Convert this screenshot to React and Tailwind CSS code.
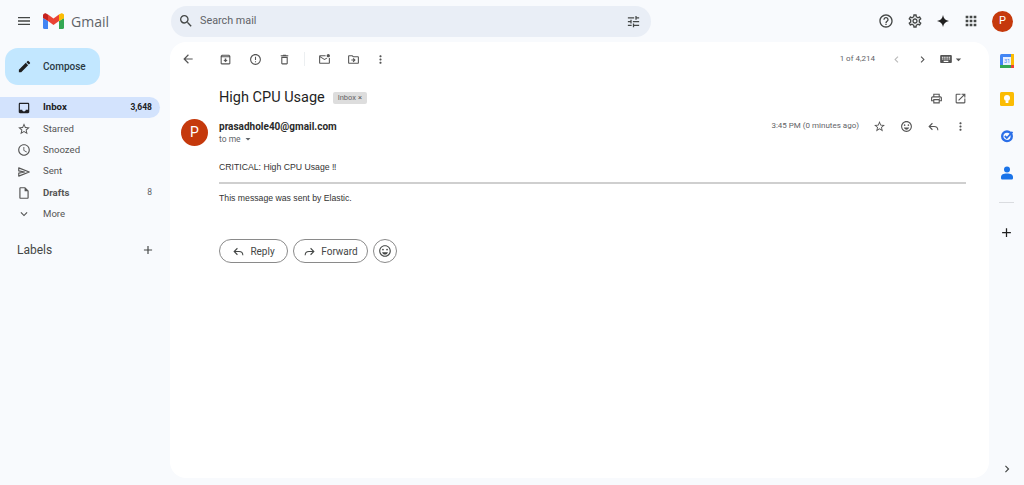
import {
  MdMenu, MdSearch, MdTune, MdHelpOutline, MdOutlineSettings, MdApps, MdArrowBack, MdOutlineArchive,
  MdErrorOutline, MdOutlineDelete, MdOutlineMarkEmailUnread, MdOutlineDriveFileMove, MdMoreVert,
  MdChevronLeft, MdChevronRight, MdKeyboard, MdArrowDropDown, MdOutlinePrint, MdOpenInNew, MdStarBorder,
  MdOutlineEmojiEmotions, MdInbox, MdOutlineAccessTime, MdOutlineInsertDriveFile,
  MdExpandMore, MdAdd, MdEdit,
} from 'react-icons/md'

function SentIcon({ size = 14 }) {
  return (
    <svg width={size} height={size} viewBox="0 0 24 24" fill="none" stroke="currentColor" strokeWidth="2" strokeLinejoin="round">
      <path d="M3 5 21 12 3 19V14L13 12 3 10z" />
    </svg>
  )
}

function ReplyIcon({ size = 13, className = '' }) {
  return (
    <svg className={className} width={size} height={size} viewBox="0 0 24 24" fill="none" stroke="currentColor" strokeWidth="2">
      <path d="M10 6 4 12l6 6M4 12h9c4 0 7 3 7 7" />
    </svg>
  )
}

const NAV = [
  { label: 'Inbox', icon: MdInbox, count: '3,648', active: true },
  { label: 'Starred', icon: MdStarBorder },
  { label: 'Snoozed', icon: MdOutlineAccessTime },
  { label: 'Sent', icon: SentIcon },
  { label: 'Drafts', icon: MdOutlineInsertDriveFile, count: '8', bold: true },
  { label: 'More', icon: MdExpandMore },
]

function GmailLogo() {
  return (
    <svg width="21" height="16" viewBox="0 0 21 16">
      <path d="M1.5 16A1.5 1.5 0 0 1 0 14.5V5l5 3v8z" fill="#4285f4" />
      <path d="M16 16V8l5-3v9.5a1.5 1.5 0 0 1-1.5 1.5z" fill="#34a853" />
      <path d="M16 1.500 21 1.500V5l-5 3z" fill="#fbbc04" />
      <path d="M5 8V1.500l5.500 4.100L16 1.500V8l-5.500 4.100z" fill="#ea4335" />
      <path d="M0 2.600C0 .8 2-.3 3.500.8L5 1.500V8L0 5z" fill="#c5221f" />
      <path d="M16 1.500 17.500.8C19-.3 21 .8 21 2.600V5l-5 3z" fill="#fbbc04" />
    </svg>
  )
}

function Avatar({ className }) {
  return (
    <div className={`flex items-center justify-center rounded-full bg-[#c5390c] text-white shrink-0 ${className}`}>
      P
    </div>
  )
}

function Sidebar() {
  return (
    <aside className="w-[170px] shrink-0 flex flex-col">
      <button className="ml-[5px] mt-[6px] w-[95px] h-[37px] rounded-[13px] bg-[#c2e7ff] flex items-center pl-[12px] gap-[11px] text-[10px] font-medium text-[#2a3a45]">
        <MdEdit size={15} className="text-[#1f1f1f]" />
        Compose
      </button>
      <nav className="mt-[12px] w-[160px] flex flex-col">
        {NAV.map(item => (
          <div
            key={item.label}
            className={`h-[21.3px] flex items-center pl-[17px] pr-2 gap-[12px] rounded-r-full text-[9.6px] ${item.active ? 'bg-[#d3e3fd] font-bold text-[#202124]' : 'text-[#555]'} ${item.bold ? 'font-bold' : ''}`}
          >
            <item.icon size={14} />
            <span className="flex-1">{item.label}</span>
            {item.count && <span className={`text-[8.5px] ${item.active ? 'font-bold' : 'font-normal text-[#5f6368]'}`}>{item.count}</span>}
          </div>
        ))}
      </nav>
      <div className="mt-[4px] w-[160px] h-[42px] flex items-center justify-between pl-[17px] pr-[5px] text-[#444746]">
        <span className="text-[12px]">Labels</span>
        <MdAdd size={14} />
      </div>
    </aside>
  )
}

function ToolIcon({ icon: Icon, size = 13, className = '' }) {
  return <Icon size={size} className={`shrink-0 text-[#555] ${className}`} />
}

function Message() {
  return (
    <main className="flex-1 bg-white rounded-2xl flex flex-col min-w-0 text-[#444746]">
      <div className="h-[34px] flex items-center pl-[11px] pr-[24px]">
        <ToolIcon icon={MdArrowBack} size={14} />
        <div className="ml-[24px] flex items-center">
          <ToolIcon icon={MdOutlineArchive} />
          <ToolIcon icon={MdErrorOutline} className="ml-[17px]" />
          <ToolIcon icon={MdOutlineDelete} className="ml-[16px]" />
          <div className="ml-[13px] w-px h-[14px] bg-[#eceff1]" />
          <ToolIcon icon={MdOutlineMarkEmailUnread} className="ml-[13px]" />
          <ToolIcon icon={MdOutlineDriveFileMove} className="ml-[16px]" />
          <ToolIcon icon={MdMoreVert} className="ml-[14px]" />
        </div>
        <span className="ml-auto text-[8px] text-[#5f6368]">1 of 4,214</span>
        <ToolIcon icon={MdChevronLeft} className="ml-[15px] opacity-40" />
        <ToolIcon icon={MdChevronRight} className="ml-[13px]" />
        <ToolIcon icon={MdKeyboard} size={14} className="ml-[10px]" />
        <ToolIcon icon={MdArrowDropDown} size={13} className="-ml-[1px]" />
      </div>

      <div className="mt-[11px] ml-[49px] mr-[22px] h-[22px] flex items-center">
        <h1 className="text-[14.5px] text-[#1f1f1f] leading-none">High CPU Usage</h1>
        <span className="ml-[8px] h-[12px] w-[34px] rounded-[2px] bg-[#dddddd] text-[#666666] text-[7.5px] flex items-center justify-center gap-[2px]">
          Inbox <span className="text-[#444]">×</span>
        </span>
        <ToolIcon icon={MdOutlinePrint} className="ml-auto" />
        <ToolIcon icon={MdOpenInNew} className="ml-[11px]" />
      </div>

      <div className="mt-[10px] ml-[11px] mr-[22px] flex items-start">
        <Avatar className="w-[27px] h-[27px] text-[14px]" />
        <div className="ml-[11px] flex-1">
          <div className="flex items-center h-[14px]">
            <span className="text-[10px] font-bold text-[#2a2a2a]">prasadhole40@gmail.com</span>
            <span className="ml-auto text-[8px] text-[#5f6368]">3:45 PM (0 minutes ago)</span>
            <ToolIcon icon={MdStarBorder} className="ml-[14px]" />
            <ToolIcon icon={MdOutlineEmojiEmotions} className="ml-[14px]" />
            <ReplyIcon className="ml-[14px] text-[#555]" />
            <ToolIcon icon={MdMoreVert} className="ml-[14px]" />
          </div>
          <div className="h-[12px] flex items-center text-[8.5px] text-[#5f6368]">
            to me
            <MdArrowDropDown size={12} className="ml-[1px]" />
          </div>
        </div>
      </div>

      <div className="ml-[49px] mr-[23px] mt-[14px] text-[8.7px] text-[#333] font-['Liberation_Sans',sans-serif]">
        <p className="h-[14px] leading-[14px]">CRITICAL: High CPU Usage ‼</p>
        <hr className="mt-[8px] border-0 h-[2px] bg-[#cfcfcf]" />
        <p className="mt-[7px] h-[14px] leading-[14px]">This message was sent by Elastic.</p>
      </div>

      <div className="ml-[49px] mt-[34px] flex items-center gap-[5px] text-[10px] text-[#444746]">
        <button className="w-[69px] h-[24px] rounded-full border border-[#8a8a8a] flex items-center justify-center gap-[5px]">
          <ReplyIcon /> Reply
        </button>
        <button className="w-[75px] h-[24px] rounded-full border border-[#8a8a8a] flex items-center justify-center gap-[5px]">
          <ReplyIcon className="-scale-x-100" /> Forward
        </button>
        <button className="w-[24px] h-[24px] rounded-full border border-[#8a8a8a] flex items-center justify-center">
          <MdOutlineEmojiEmotions size={14} />
        </button>
      </div>
    </main>
  )
}

function RightRail() {
  return (
    <aside className="w-[35px] shrink-0 flex flex-col items-center pt-[12px] relative">
      <svg width="14" height="14" viewBox="0 0 14 14">
        <rect width="14" height="14" rx="1.5" fill="#4285f4" />
        <rect x="11" width="3" height="11" fill="#fbbc04" />
        <rect y="11" width="11" height="3" fill="#34a853" />
        <rect x="11" y="11" width="3" height="3" fill="#ea4335" />
        <rect x="3" y="3" width="8" height="8" fill="#e8f0fe" />
        <text x="7" y="9.3" textAnchor="middle" fontSize="5.500" fill="#4285f4" fontFamily="Roboto, sans-serif">31</text>
      </svg>
      <svg className="mt-[24px]" width="14" height="14" viewBox="0 0 14 14">
        <rect width="14" height="14" rx="1.5" fill="#fbbc04" />
        <circle cx="7" cy="6" r="3" fill="#fff" />
        <rect x="5.600" y="9" width="2.800" height="2" fill="#fff" />
      </svg>
      <svg className="mt-[23px]" width="14" height="14" viewBox="0 0 14 14">
        <circle cx="7" cy="7.300" r="4.800" fill="none" stroke="#2b6fe8" strokeWidth="2.400" />
        <path d="M4.800 7 6.800 9 12.500 2.800" fill="none" stroke="#2b6fe8" strokeWidth="1.800" />
      </svg>
      <svg className="mt-[23px]" width="12" height="14" viewBox="0 0 12 14">
        <circle cx="6" cy="3.500" r="3" fill="#1a73e8" />
        <path d="M1 13.500C0 13.500 0 12.500 0 11 0 8.500 2.500 7.500 6 7.500S12 8.500 12 11C12 12.500 12 13.500 11 13.500z" fill="#1a73e8" />
      </svg>
      <div className="mt-[22px] w-[15px] h-px bg-[#dadce0]" />
      <MdAdd size={15} className="mt-[22px] text-[#1f1f1f]" />
      <MdChevronRight size={14} className="absolute bottom-[2px] text-[#444746]" />
    </aside>
  )
}

export default function App() {
  return (
    <div className="w-[1024px] h-[485px] overflow-hidden bg-[#f8fafd] font-['Roboto',sans-serif] flex flex-col">
      <header className="h-[42px] shrink-0 flex items-center">
        <div className="w-[171px] shrink-0 flex items-center pl-[16px]">
          <MdMenu size={16} className="text-[#444746]" />
          <div className="ml-[11px]"><GmailLogo /></div>
          <span className="ml-[7px] text-[14px] text-[#5f6368] font-['Open_Sans',sans-serif]">Gmail</span>
        </div>
        <div className="w-[480px] h-[31px] rounded-full bg-[#e9eef6] flex items-center pl-[7px] pr-[10px] text-[#444746]">
          <MdSearch size={16} />
          <span className="ml-[6px] text-[10.8px] text-[#5f6368]">Search mail</span>
          <MdTune size={15} className="ml-auto" />
        </div>
        <div className="ml-auto flex items-center pr-[11px] text-[#444746]">
          <MdHelpOutline size={16} />
          <MdOutlineSettings size={16} className="ml-[13px]" />
          <svg className="ml-[14px]" width="12" height="12" viewBox="0 0 12 12">
            <path d="M6 0C6.500 3.500 8.500 5.500 12 6 8.500 6.500 6.500 8.500 6 12 5.500 8.500 3.500 6.500 0 6 3.500 5.500 5.500 3.500 6 0z" fill="#1f1f1f" />
          </svg>
          <MdApps size={16} className="ml-[14px]" />
          <Avatar className="ml-[13px] w-[21px] h-[21px] text-[11px]" />
        </div>
      </header>
      <div className="flex-1 flex min-h-0 pb-[7px]">
        <Sidebar />
        <Message />
        <RightRail />
      </div>
    </div>
  )
}
